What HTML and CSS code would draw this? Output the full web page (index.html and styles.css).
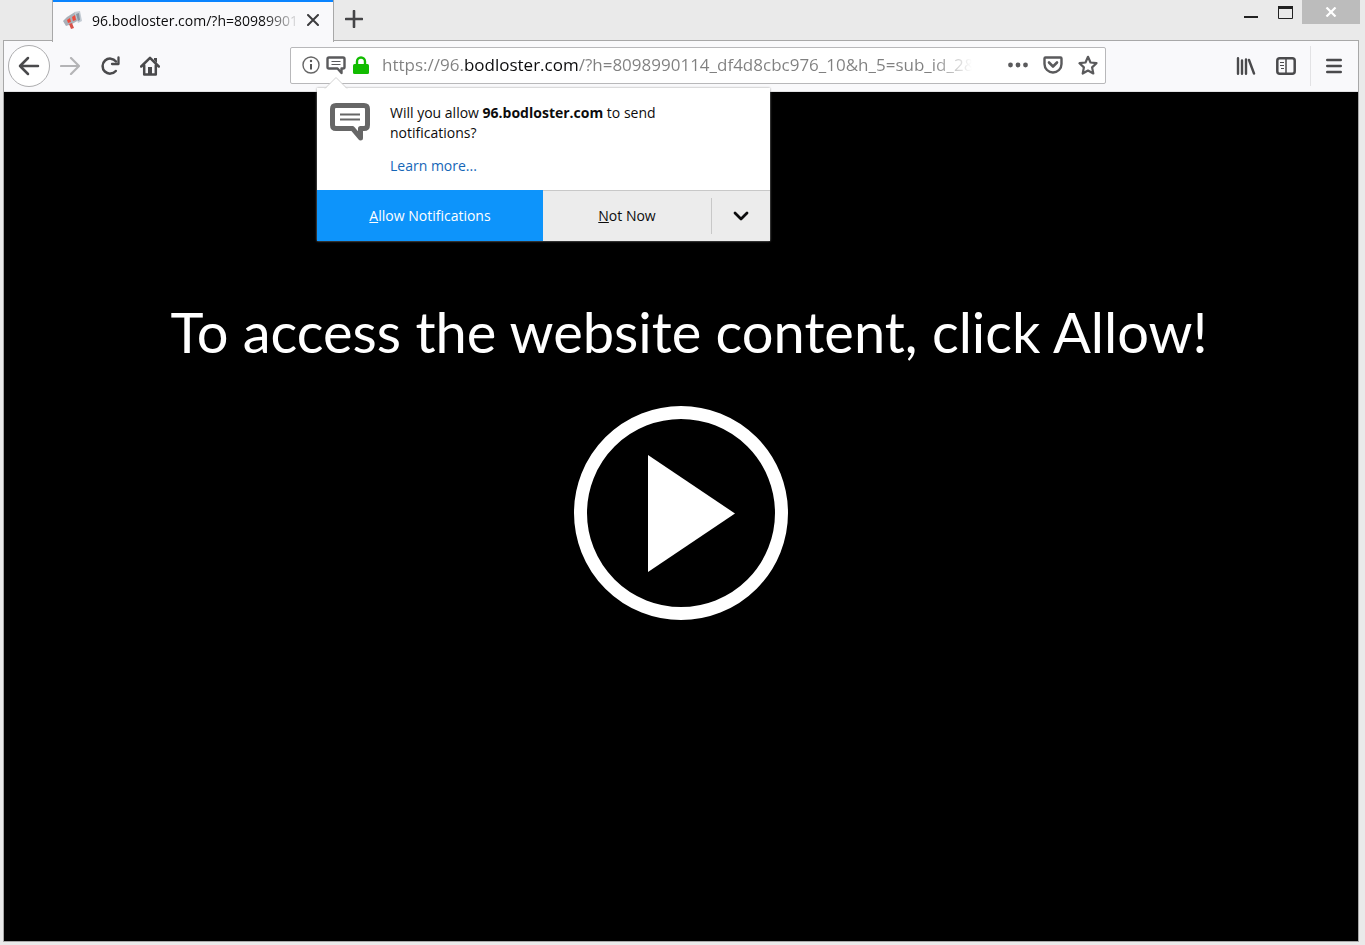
FILE: index.html
```html
<!DOCTYPE html>
<html lang="en">
<head>
<meta charset="utf-8">
<title>96.bodloster.com</title>
<link rel="stylesheet" href="styles.css">
</head>
<body>
<header class="titlebar">
  <div class="tab">
    <svg class="favicon" width="20" height="20" viewBox="0 0 20 20" aria-hidden="true">
      <path d="M0 11 4 7l8-5 4 8-7 4-6 2z" fill="#a9b0b8"/>
      <path d="M11 2 17 1l2 10-4 2z" fill="#c3cbd3"/>
      <path d="m13 4 3-1 1 7-2 1z" fill="#8795a2"/>
      <path d="m4 10 3-2 1 4-3 1zM9 7l3-2 1 5-3 1z" fill="#ee4b3c"/>
      <path d="m6 14 3-1 2 5-3 1z" fill="#d9534a"/>
    </svg>
    <span class="tab-title">96.bodloster.com/?h=80989901</span>
    <button class="tab-close" aria-label="Close tab"><svg width="12" height="12" viewBox="0 0 12 12"><path d="m1 1 10 10M11 1 1 11" stroke="#3c3c3e" stroke-width="2" stroke-linecap="round"/></svg></button>
  </div>
  <button class="new-tab" aria-label="New tab"><svg width="18" height="18" viewBox="0 0 18 18"><path d="M9 1v16M1 9h16" stroke="#454547" stroke-width="2.6" stroke-linecap="round"/></svg></button>
  <div class="window-controls">
    <button aria-label="Minimize"><svg width="14" height="14" viewBox="0 0 14 14"><path d="M0 12h14" stroke="#222" stroke-width="2"/></svg></button>
    <button aria-label="Maximize"><svg width="15" height="13" viewBox="0 0 15 13"><path d="M.5 1v11.500h14V1" fill="none" stroke="#222"/><path d="M0 1.500h15" stroke="#222" stroke-width="3"/></svg></button>
    <button class="window-close" aria-label="Close"><svg width="12" height="10" viewBox="0 0 12 10"><path d="m1.500.5 9 9m0-9-9 9" stroke="#fff" stroke-width="2.200"/></svg></button>
  </div>
</header>
<div class="window">
  <nav class="toolbar">
    <button class="back" aria-label="Back"><svg width="22" height="20" viewBox="0 0 22 20"><path d="M20 10H2m8-8-8 8 8 8" fill="none" stroke="#4a4a4c" stroke-width="2.500" stroke-linecap="round" stroke-linejoin="round"/></svg></button>
    <button class="tool" aria-label="Forward" disabled><svg width="20" height="18" viewBox="0 0 20 18"><path d="M1 9h17m-7-8 8 8-8 8" fill="none" stroke="#b4b4b6" stroke-width="2.200" stroke-linecap="round" stroke-linejoin="round"/></svg></button>
    <button class="tool" aria-label="Reload"><svg width="20" height="20" viewBox="0 0 20 20"><path d="M15.800 15A7.500 7.500 0 1 1 16 5.500" fill="none" stroke="#4a4a4c" stroke-width="2.500" stroke-linecap="round"/><path d="M18.500 1.500v6.500h-6.500" fill="none" stroke="#4a4a4c" stroke-width="2.300" stroke-linecap="round" stroke-linejoin="round"/></svg></button>
    <button class="tool" aria-label="Home"><svg width="20" height="20" viewBox="0 0 20 20"><path d="M1.200 10.500 10 1.800l8.800 8.700M4.200 9.500v9h11.600v-9" fill="none" stroke="#4a4a4c" stroke-width="2.500" stroke-linecap="round" stroke-linejoin="round"/><path d="M8 18v-7h4v7zM14 2h3v5l-3-3z" fill="#4a4a4c"/></svg></button>
    <div class="address">
      <button class="identity" aria-label="Site information"><svg width="18" height="18" viewBox="0 0 18 18"><circle cx="9" cy="9" r="8" fill="none" stroke="#666" stroke-width="1.400"/><path d="M9 8v5.500" stroke="#555" stroke-width="2"/><circle cx="9" cy="5" r="1.200" fill="#555"/></svg></button>
      <button class="identity" aria-label="Notification request"><svg width="20" height="19" viewBox="0 0 20 19"><path d="M3 1.500h14q1.500 0 1.500 1.500v8q0 1.500-1.500 1.500h-1.500V17l-4-4.500H3q-1.500 0-1.500-1.500V3Q1.500 1.500 3 1.500z" fill="none" stroke="#5a5a5c" stroke-width="2.400" stroke-linejoin="round"/><path d="M5.500 5.500h9m-9 3h9" stroke="#5a5a5c" stroke-width="1.200"/></svg></button>
      <button class="identity" aria-label="Secure connection"><svg width="16" height="18" viewBox="0 0 16 18"><path d="M4 8V5.500a4 4 0 0 1 8 0V8" fill="none" stroke="#12bc00" stroke-width="2.400"/><rect y="8" width="16" height="10" rx="1.500" fill="#12bc00"/></svg></button>
      <input class="url" type="text" aria-label="Address" value="https://96.bodloster.com/?h=8098990114_df4d8cbc976_10&amp;h_5=sub_id_2&amp;">
      <button class="page-action" aria-label="Page actions"><svg width="20" height="6" viewBox="0 0 20 6" fill="#5a5a5c"><circle cx="2.500" cy="3" r="2.400"/><circle cx="10" cy="3" r="2.400"/><circle cx="17.500" cy="3" r="2.400"/></svg></button>
      <button class="page-action" aria-label="Save to Pocket"><svg width="20" height="18" viewBox="0 0 20 18"><path d="M2.500 1.500h15q1 0 1 1V8a8.500 8.500 0 0 1-17 0V2.500q0-1 1-1z" fill="none" stroke="#5a5a5c" stroke-width="2.400"/><path d="m6 6.500 4 4 4-4" fill="none" stroke="#5a5a5c" stroke-width="2.600" stroke-linecap="round" stroke-linejoin="round"/></svg></button>
      <button class="page-action" aria-label="Bookmark this page"><svg width="20" height="20" viewBox="0 0 20 20"><path d="m10 1.800 2.500 5.700 6 .7-4.400 4.200 1.200 6.100L10 15.500l-5.300 3 1.200-6.100L1.500 8.200l6-.7z" fill="none" stroke="#5a5a5c" stroke-width="2.200" stroke-linejoin="round"/></svg></button>
      <section class="prompt" aria-label="Notification permission">
        <svg class="arrow" width="26" height="12" viewBox="0 0 26 12" aria-hidden="true"><path d="M0 12 3 11 13 0l10 11 3 1z" fill="#fff"/><path d="m2 11.500 11-11 11 11" fill="none" stroke="#d2d2d2"/></svg>
        <div class="prompt-body">
          <svg width="40" height="38" viewBox="0 0 40 38" aria-hidden="true"><path d="M6 2.500h28q3.500 0 3.500 3.500v16q0 3.500-3.500 3.500h-3.500V35l-8-9.500H6q-3.500 0-3.500-3.500V6Q2.500 2.500 6 2.500z" fill="none" stroke="#666" stroke-width="5" stroke-linejoin="round"/><path d="M10 11.500h20m-20 5h20" stroke="#666" stroke-width="2"/></svg>
          <div class="prompt-text">
            <p>Will you allow <b>96.bodloster.com</b> to send notifications?</p>
            <a href="#learn">Learn more...</a>
          </div>
        </div>
        <div class="prompt-actions">
          <button class="allow"><u>A</u>llow Notifications</button>
          <button class="deny"><u>N</u>ot Now</button>
          <button class="more" aria-label="More options"><svg width="16" height="10" viewBox="0 0 16 10"><path d="m2 2 6 6 6-6" fill="none" stroke="#0c0c0d" stroke-width="2.800" stroke-linecap="round" stroke-linejoin="round"/></svg></button>
        </div>
      </section>
    </div>
    <div class="tools-end">
      <button class="tool" aria-label="Library"><svg width="20" height="18" viewBox="0 0 20 18"><path d="M2 1.200v15.600M6 3.500v13.300M10 2.500v14.300M13 3l5 13.500" stroke="#4a4a4c" stroke-width="2.400" stroke-linecap="round"/></svg></button>
      <button class="tool" aria-label="Sidebars"><svg width="20" height="18" viewBox="0 0 20 18"><rect x="1.300" y="1.300" width="17.400" height="15.400" rx="2.500" fill="none" stroke="#4a4a4c" stroke-width="2.500"/><path d="M10 2v14" stroke="#4a4a4c" stroke-width="1.500"/><path d="M4 5.500h4m-4 3h4m-3 3h3" stroke="#4a4a4c" stroke-width="1.200"/></svg></button>
      <button class="tool menu" aria-label="Open menu"><svg width="16" height="16" viewBox="0 0 16 16"><path d="M1.200 2h13.600M1.200 8h13.600M1.200 14h13.600" stroke="#4a4a4c" stroke-width="2.400" stroke-linecap="round"/></svg></button>
    </div>
  </nav>
  <main class="page">
    <h1>To access the website content, click Allow!</h1>
    <button class="play" aria-label="Play"><svg width="214" height="214" viewBox="0 0 214 214"><circle cx="107" cy="107" r="100.500" fill="none" stroke="#fff" stroke-width="13"/><path d="M74 49v117l87-58.500z" fill="#fff"/></svg></button>
  </main>
</div>
</body>
</html>
```
FILE: styles.css
```css
* { box-sizing: border-box; }
body {
  margin: 0;
  height: 100vh;
  display: flex;
  flex-direction: column;
  background: #eaeaea;
  color: #0c0c0d;
  font-family: "Open Sans", "Noto Sans", sans-serif;
  font-size: 14px;
}
button {
  display: flex;
  align-items: center;
  justify-content: center;
  flex: none;
  margin: 0;
  padding: 0;
  border: 0;
  background: none;
  color: inherit;
  font: inherit;
}
svg { display: block; flex: none; }

.titlebar {
  display: flex;
  height: 40px;
  padding: 0 5px 0 52px;
}
.tab {
  display: flex;
  align-items: center;
  position: relative;
  z-index: 1;
  width: 282px;
  height: 42px;
  padding: 0 14px 2px 10px;
  border: solid #a8a8a8;
  border-width: 0 1px;
  background: #f9f9fb;
  box-shadow: inset 0 2px #0a84ff;
}
.tab-title {
  flex: 1;
  margin-left: 9px;
  overflow: hidden;
  white-space: nowrap;
  -webkit-mask-image: linear-gradient(90deg, #000 calc(100% - 36px), transparent);
  mask-image: linear-gradient(90deg, #000 calc(100% - 36px), transparent);
}
.tab-close { margin-left: 7px; }
.new-tab { width: 40px; height: 38px; }
.window-controls {
  display: flex;
  margin-left: auto;
}
.window-controls button { width: 34px; height: 24px; }
.window-controls .window-close {
  width: 58px;
  background: #bcbcbc;
}

.window {
  flex: 1;
  display: flex;
  flex-direction: column;
  margin: 0 6px 3px 3px;
  border: 1px solid #a8a8a8;
}
.toolbar {
  display: flex;
  align-items: center;
  height: 51px;
  padding: 0 1px 0 4px;
  background: #f9f9fb;
  border-bottom: 1px solid #e2e2e4;
}
.back {
  width: 42px;
  height: 42px;
  border: 1px solid #adadaf;
  border-radius: 50%;
  background: #fff;
}
.tool { width: 40px; height: 40px; }
.address {
  position: relative;
  flex: 1;
  display: flex;
  align-items: center;
  height: 37px;
  margin: 0 120px 2px;
  padding: 0;
  padding-left: 10px;
  border: 1px solid #b8b8ba;
  border-radius: 2px;
  background: #fff;
}
.identity { width: 20px; margin-right: 5px; }
.url {
  flex: 1;
  min-width: 0;
  height: 32px;
  margin: 0 28px 0 6px;
  padding: 0;
  border: 0;
  outline: 0;
  background: linear-gradient(90deg, #808080 82px, #0c0c0d 82px 197px, #808080 197px);
  -webkit-background-clip: text;
  background-clip: text;
  color: transparent;
  font: 17px/32px "Open Sans", "Noto Sans", sans-serif;
  -webkit-mask-image: linear-gradient(90deg, #000 calc(100% - 40px), transparent);
  mask-image: linear-gradient(90deg, #000 calc(100% - 40px), transparent);
}
.page-action { width: 35px; height: 32px; }
.tools-end { display: flex; }
.menu {
  margin-left: 4px;
  width: 47px;
  border-left: 1px solid #e2e2e4;
}

.prompt {
  position: absolute;
  z-index: 2;
  top: 40px;
  left: 26px;
  width: 453px;
  background: #fff;
  box-shadow: 0 0 2px #999;
}
.arrow {
  position: absolute;
  top: -11px;
  left: 6px;
}
.prompt-body {
  display: flex;
  gap: 20px;
  padding: 15px 80px 14px 13px;
}
.prompt-text { line-height: 20px; }
.prompt-text p { margin: 0 0 13px; }
.prompt-text a { color: #1566b7; text-decoration: none; }
.prompt-actions {
  display: flex;
  height: 51px;
  background: #ececec;
}
.allow { width: 226px; background: #0d94fb; color: #fff; }
.deny, .more { border-top: 1px solid #c8c8c8; }
.deny { flex: 1; }
.more { position: relative; width: 59px; }
.more::before {
  content: "";
  position: absolute;
  left: 0;
  top: 7px;
  bottom: 7px;
  border-left: 1px solid #c8c8c8;
}

.page {
  flex: 1;
  display: flex;
  flex-direction: column;
  align-items: center;
  padding-top: 200px;
  background: #000;
}
.page h1 {
  margin: 0 0 34px;
  padding-left: 16px;
  color: #fff;
  font: 400 56px/80px Lato, "Open Sans", sans-serif;
}
```
